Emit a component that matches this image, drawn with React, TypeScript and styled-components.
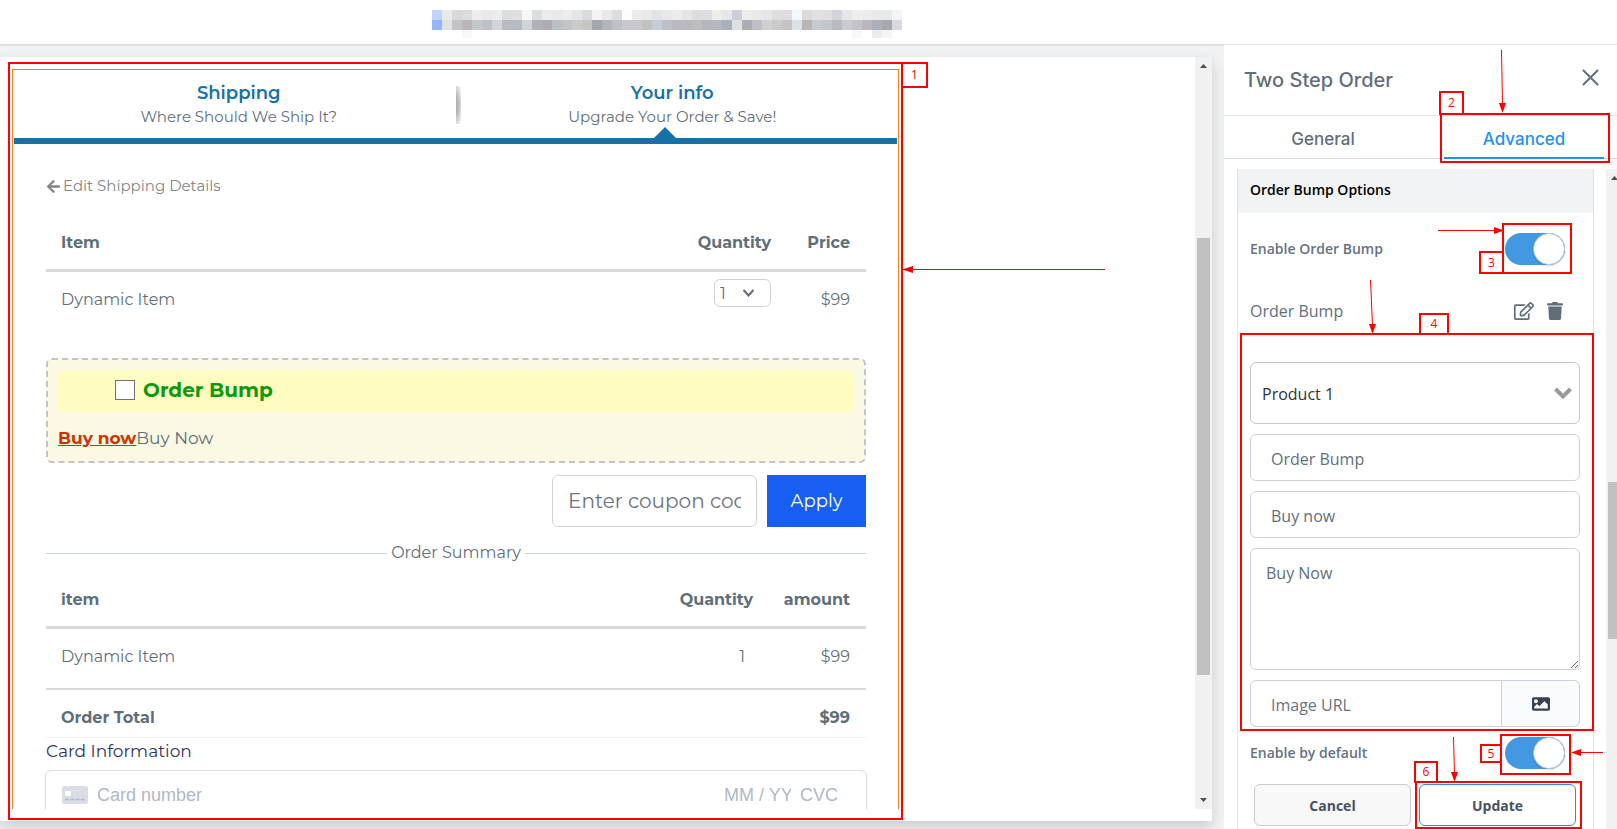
import React from 'react';
import styled, { createGlobalStyle, css } from 'styled-components';
import { FaArrowLeft, FaImage, FaRegEdit, FaTrash } from 'react-icons/fa';

const display = 'Montserrat, Inter, sans-serif';
const ui = '"Segoe UI", "Open Sans", sans-serif';
const heading = 'Inter, sans-serif';
const slate = '#5f6f7a';
const red = '#ff0000';

const GlobalStyle = createGlobalStyle`
  *, *::before, *::after { box-sizing: border-box; }
  body { margin: 0; background: #fff; color: ${slate}; font-family: ${ui}; font-size: 16px; line-height: 24px; overflow: hidden; }
  input, select, textarea, button { font: inherit; color: inherit; margin: 0; }
  h2, h3, p { margin: 0; }
`;

/* ---------- page shell ---------- */
const Page = styled.div`
  display: grid;
  grid-template: 44px minmax(0, 1fr) / minmax(0, 1fr) 393px;
  height: 100vh;
`;
const TopBar = styled.header`
  grid-column: 1 / -1;
  padding: 10px 0 0 432px;
  svg { display: block; }
`;
const Workspace = styled.main`
  display: flex;
  min-height: 0;
  padding: 11px 12px 8px 0;
  border-top: 2px solid #e0e0e1;
  background: #f1f2f4;
`;
const Canvas = styled.div`
  flex: 1;
  display: flex;
  justify-content: space-between;
  min-width: 0;
  background: #fff;
  box-shadow: 0 6px 14px rgba(0, 0, 0, 0.16);
`;
const Panel = styled.aside`
  position: relative;
  display: flex;
  flex-direction: column;
  min-height: 0;
  border-top: 1px solid #e0e0e1;
  background: #fff;
`;

/* ---------- scroll bars ---------- */
const Track = styled.div<{ $bottomGap?: number }>`
  display: flex;
  flex-direction: column;
  align-items: center;
  width: 17px;
  margin-bottom: ${p => p.$bottomGap ?? 0}px;
  background: #f1f1f1;
`;
const TrackPart = styled.div<{ $grow: number; $thumb?: boolean }>`
  flex: ${p => p.$grow} 0 0;
  width: 13px;
  background: ${p => (p.$thumb ? '#c1c1c1' : 'transparent')};
`;
const TrackArrow = styled.svg`
  flex: none;
  width: 17px;
  height: 17px;
  fill: #505050;
`;

function ScrollBar({ before, thumb, after, bottomGap, end }: { before: number; thumb: number; after: number; bottomGap?: number; end?: boolean }) {
  return (
    <Track $bottomGap={bottomGap} aria-hidden="true">
      <TrackArrow viewBox="0 0 17 17"><path d="M5 11 8.500 7 12 11Z" /></TrackArrow>
      <TrackPart $grow={before} />
      <TrackPart $grow={thumb} $thumb />
      <TrackPart $grow={after} />
      {end && <TrackArrow viewBox="0 0 17 17"><path d="M5 6 8.500 10 12 6Z" /></TrackArrow>}
    </Track>
  );
}

/* ---------- order form ---------- */
const Marked = styled.section`
  position: relative;
  flex: 1;
  display: flex;
  max-width: 895px;
  margin: 5px 0 1px 8px;
  padding: 5px 2px 9px;
  border: 2px solid ${red};
`;
const Form = styled.form`
  flex: 1;
  min-width: 0;
  padding: 0 1px;
  overflow: hidden;
  border: 1px solid #f5801f;
  border-bottom: 0;
  color: ${slate};
  font-family: ${display};
  font-size: 16px;
  font-weight: 400;
`;
const Steps = styled.div`
  display: flex;
  height: 74px;
  border-bottom: 6px solid #1671a9;
`;
const Step = styled.div<{ $current?: boolean }>`
  position: relative;
  flex: 1;
  padding-top: 11px;
  text-align: center;
  font-size: 15px;
  ${p => (p.$current ? css`
    padding-right: 8px;
    &::after {
      content: '';
      position: absolute;
      left: calc(50% - 22px);
      bottom: 0;
      border: 11px solid transparent;
      border-top: 0;
      border-bottom-color: #1671a9;
    }
  ` : css`
    padding-left: 8px;
    &::after {
      content: '';
      position: absolute;
      right: -5px;
      top: 16px;
      width: 5px;
      height: 38px;
      background: radial-gradient(ellipse at left center, #b4b4b4 30%, #fff 100%);
    }
  `)}
`;
const StepTitle = styled.h2`
  color: #1671a9;
  font-size: 18px;
  font-weight: 600;
  line-height: 24px;
`;
const FormBody = styled.div`
  padding: 30px 31px 0 32px;
`;
const BackLink = styled.a`
  display: flex;
  align-items: center;
  gap: 2px;
  color: #858585;
  font-size: 15px;
  text-decoration: none;
`;
const Items = styled.table<{ $top: number; $last: number }>`
  width: 100%;
  margin-top: ${p => p.$top}px;
  border-collapse: separate;
  border-spacing: 0;
  th, td { padding: 16px 0 19px; text-align: right; vertical-align: top; font-weight: 400; }
  th:first-child, td:first-child { padding-left: 15px; text-align: left; }
  th:last-child, td:last-child { width: ${p => p.$last}px; padding-right: 16px; }
  thead th { padding-top: 12px; padding-bottom: 14px; border-bottom: 3px solid #d9d9d9; font-weight: 700; }
  tfoot th, tfoot td { padding-bottom: 7px; border-top: 2px solid #d9d9d9; border-bottom: 1px solid #eff5f5; font-weight: 700; }
`;
const QuantityCell = styled.td`
  && { padding-top: 7px; padding-bottom: 25px; }
`;
const CountCell = styled.td`
  && { padding-right: 8px; }
`;
const SelectBox = styled.span`
  display: inline-grid;
  align-items: center;
  vertical-align: top;
  svg { grid-area: 1 / 1; justify-self: end; pointer-events: none; }
`;
const QuantitySelect = styled.select`
  grid-area: 1 / 1;
  width: 57px;
  height: 28px;
  padding: 2px 5px 0;
  appearance: none;
  border: 1px solid #cfd2da;
  border-radius: 6px;
  background: #fff;
  font-size: 16px;
`;
const SmallChevron = styled.svg`
  width: 13px;
  height: 8px;
  margin: 0 16px 1px 0;
  fill: none;
  stroke: #626b7a;
  stroke-width: 2;
  stroke-linecap: round;
`;
const Bump = styled.div`
  margin-top: 26px;
  padding: 10px 10px 11px;
  border: 2px dashed #c4c4c4;
  border-radius: 6px;
  background: #fbf8e4;
  font-size: 17px;
`;
const BumpOffer = styled.label`
  display: flex;
  align-items: center;
  gap: 8px;
  height: 42px;
  margin-bottom: 14px;
  padding: 0 0 2px 57px;
  border-radius: 6px;
  background: #fefcc0;
  color: #0a9a0a;
  font-size: 20px;
  font-weight: 700;
`;
const BumpCheck = styled.input`
  width: 20px;
  height: 20px;
  appearance: none;
  border: 1px solid #6b7280;
  background: #fff;
`;
const BumpLead = styled.strong`
  color: #cc3300;
  font-weight: 700;
  text-decoration: underline;
`;
const Coupon = styled.div`
  display: flex;
  justify-content: flex-end;
  gap: 10px;
  height: 52px;
  margin-top: 12px;
`;
const CouponInput = styled.input`
  width: 205px;
  padding: 0 15px;
  border: 1px solid #cfd2da;
  border-radius: 6px;
  font-size: 20px;
  font-weight: 400;
  &::placeholder { color: #6b7280; opacity: 1; }
`;
const ApplyButton = styled.button`
  width: 99px;
  border: 0;
  background: #175ff2;
  color: #fff;
  font-size: 18px;
`;
const SummaryRule = styled.div`
  display: flex;
  align-items: center;
  gap: 4px;
  margin-top: 14px;
  &::before, &::after { content: ''; flex: 1; height: 1px; background: #cbd3da; }
`;
const CardLabel = styled.label`
  display: block;
  margin: 1px 0 7px;
  color: #32325d;
  font-size: 17px;
`;
const CardBox = styled.div`
  display: flex;
  align-items: center;
  gap: 9px;
  height: 50px;
  margin: 0 -1px;
  padding: 0 28px 0 16px;
  border: 1px solid #dedede;
  border-radius: 6px;
  box-shadow: 0 1px 2px rgba(0, 0, 0, 0.08);
`;
const CardInput = styled.input<{ $width?: number }>`
  flex: ${p => (p.$width ? `0 0 ${p.$width}px` : '1')};
  min-width: 0;
  width: ${p => p.$width ?? 100}px;
  padding: 0;
  border: 0;
  font-family: "Liberation Sans", Arial, sans-serif;
  font-size: 18px;
  font-weight: 400;
  &::placeholder { color: #aeb9c6; opacity: 1; }
`;

/* ---------- settings panel ---------- */
const PanelHeader = styled.div`
  display: flex;
  align-items: center;
  justify-content: space-between;
  height: 71px;
  padding: 0 18px 0 20px;
  border-bottom: 1px solid #dfe2e5;
`;
const PanelTitle = styled.h2`
  font-family: ${heading};
  font-size: 20px;
  font-weight: 500;
`;
const CloseButton = styled.button`
  padding: 0 0 6px;
  border: 0;
  background: none;
  line-height: 0;
`;
const Tabs = styled.nav`
  display: grid;
  grid-template-columns: 1fr 1fr;
  gap: 41px;
  height: 43px;
  padding: 0 13px 0 19px;
  border-bottom: 1px solid #d5dae0;
`;
const Tab = styled.button<{ $active?: boolean }>`
  margin-bottom: -1px;
  padding: 4px 0 0;
  border: 0;
  border-bottom: 2px solid ${p => (p.$active ? '#2490f5' : 'transparent')};
  background: none;
  color: ${p => (p.$active ? '#2490f5' : slate)};
  font-family: ${heading};
  font-size: 17px;
  font-weight: 500;
`;
const PanelBody = styled.div`
  flex: 1;
  display: grid;
  grid-template-columns: minmax(0, 1fr) 17px;
  gap: 12px;
  min-height: 0;
  margin: 10px -6px 0 13px;
  overflow: hidden;
`;
const PanelClip = styled.div`
  flex: 1;
  display: flex;
  min-height: 0;
  overflow: hidden;
`;
const Group = styled.section`
  border: 1px solid #dfe1e5;
  border-width: 0 1px;
`;
const GroupTitle = styled.h3`
  height: 44px;
  padding: 9px 12px;
  background: #f2f3f5;
  color: #000;
  font-size: 14px;
  font-weight: 600;
`;
const Fields = styled.div`
  padding: 20px 13px 0 12px;
`;
const SwitchRow = styled.label`
  display: flex;
  align-items: center;
  justify-content: space-between;
  padding-right: 15px;
  color: #66727f;
  font-size: 14px;
  font-weight: 600;
  line-height: 32px;
`;
const Switch = styled.input`
  display: flex;
  justify-content: flex-end;
  width: 60px;
  height: 32px;
  appearance: none;
  border-radius: 16px;
  background: #4299e1;
  &::after {
    content: '';
    width: 32px;
    height: 32px;
    border: 1px solid #b4c5d6;
    border-radius: 50%;
    background: #fff;
    box-shadow: 0 1px 2px rgba(0, 0, 0, 0.15);
  }
`;
const BumpRow = styled.div`
  display: flex;
  align-items: center;
  justify-content: space-between;
  margin: 34px 0 39px;
  padding-right: 16px;
`;
const IconActions = styled.div`
  display: flex;
  gap: 12px;
`;
const IconButton = styled.button`
  padding: 0;
  border: 0;
  background: none;
  line-height: 0;
`;
const FieldStack = styled.div`
  display: flex;
  flex-direction: column;
  gap: 10px;
`;
const fieldFrame = css`
  width: 100%;
  border: 1px solid #cdd0d8;
  border-radius: 6px;
  background: #fff;
`;
const ProductSelect = styled.select`
  ${fieldFrame}
  grid-area: 1 / 1;
  height: 62px;
  padding: 2px 11px 0;
  appearance: none;
  border-color: #c4c6c8;
  color: #333;
`;
const BigChevron = styled.svg`
  width: 18px;
  height: 13px;
  margin: 0 8px 0 0;
  fill: none;
  stroke: #9a9a9a;
  stroke-width: 4;
`;
const TextField = styled.input`
  ${fieldFrame}
  height: 47px;
  padding: 2px 20px 0;
  &::placeholder { color: #6b7280; opacity: 1; }
`;
const TextArea = styled.textarea`
  ${fieldFrame}
  display: block;
  height: 122px;
  padding: 12px 15px;
  resize: vertical;
`;
const ImageField = styled.div`
  display: flex;
  ${TextField} { flex: 1; min-width: 0; border-radius: 6px 0 0 6px; }
`;
const PickButton = styled.button`
  width: 78px;
  border: 1px solid #cdd0d8;
  border-left: 0;
  border-radius: 0 6px 6px 0;
  background: #f8fafc;
  color: #374151;
  line-height: 0;
`;
const Actions = styled.div`
  display: flex;
  gap: 8px;
  padding: 15px 4px 0;
`;
const ActionButton = styled.button<{ $primary?: boolean }>`
  flex: 1;
  height: 42px;
  padding-top: 2px;
  border: 1px solid ${p => (p.$primary ? '#2b8deb' : '#cbcbcb')};
  border-radius: 6px;
  background: ${p => (p.$primary ? '#fff' : '#f8f8f8')};
  color: #475262;
  font-size: 14px;
  font-weight: 700;
`;

/* ---------- tutorial markers laid over the page ---------- */
type Box = { $x: number; $y: number; $w: number; $h: number };
const Outline = styled.div<Box>`
  position: absolute;
  left: ${p => p.$x}px;
  top: ${p => p.$y}px;
  width: ${p => p.$w}px;
  height: ${p => p.$h}px;
  border: 2px solid ${red};
  pointer-events: none;
`;
const Badge = styled(Outline)`
  display: flex;
  align-items: center;
  justify-content: center;
  background: #fff;
  color: ${red};
  font-size: 12px;
  line-height: 12px;
`;
const ArrowLayer = styled.svg<Box>`
  position: absolute;
  left: ${p => p.$x}px;
  top: ${p => p.$y}px;
  width: ${p => p.$w}px;
  height: ${p => p.$h}px;
  overflow: visible;
  pointer-events: none;
  stroke: ${red};
  fill: ${red};
  path { stroke: none; }
`;

const mosaicTop = 'bfd3ff e9e9ea d8d9db dcdde0 ededed ebe8e9 ebecee dadce0 dfdfe1 f5f6f8 dcdddf ebebed e9e9ea ececea e4e5e7 d9dbdf f4f4f2 e8e9ee dcdcde fdfdfd eaecee e9e9ea e0e2e5 e7e8ea ececec e5e5e5 dcdcde dcdee2 ededec e6e7ea cccdd5 ecedef eaeaeb e5e6ea dfdedb dddde0 f3f8fe dadada e0e0e0 dfdfe1 d3d4dc e6e6e7 ededed ececee e9e9ea e8e9ea f4f5f7'.split(' ');
const mosaicBottom = '94b5ff e1e2e3 c3c3c7 b9b5b8 c5c8cb bcc0ca d3d4d7 b9bac2 b5bbc4 d2d3d6 afb2b9 adadb3 babfc6 c3c4c6 cbcbcb c6c6c6 a1a6b0 b2b4b9 bfc1c7 c8c8ce c8c8ce c2c2c1 c5ced8 bfbfc7 b8b9c0 bababe bebebe b5b5bc b6b7bc a9b0ba dfe0e1 adadb3 c0c1c8 d0d0d2 cacacc c5c4c2 d9e1e9 b9b5b6 c7cad0 c3c6cb b9b9c3 caccd2 c4c4c7 b8b7be adb0ba a7a7ad d6d9df'.split(' ');
const mosaicTail: [number, string][] = [[3, 'f7f7f7'], [42, 'f8f8f8'], [44, 'ececee'], [45, 'f3f4f6']];

function RedactedTitle() {
  return (
    <svg width="470" height="28" viewBox="0 0 470 28" shapeRendering="crispEdges" aria-hidden="true">
      {mosaicTop.map((c, i) => <rect key={i} x={i * 10} y="0" width="10" height="10" fill={`#${c}`} />)}
      {mosaicBottom.map((c, i) => <rect key={i} x={i * 10} y="10" width="10" height="10" fill={`#${c}`} />)}
      {mosaicTail.map(([i, c]) => <rect key={i} x={i * 10} y="20" width="10" height="8" fill={`#${c}`} />)}
    </svg>
  );
}

function CardIcon() {
  return (
    <svg width="26" height="18" viewBox="0 0 26 18" aria-hidden="true">
      <rect width="26" height="18" rx="2" fill="#dadde5" />
      <rect x="3" y="5" width="6" height="5" rx="1" fill="#fff" />
      <path d="M3 13.500h20" stroke="#b3bac8" strokeWidth="1.500" strokeDasharray="4 1.300" />
    </svg>
  );
}

function OrderForm() {
  return (
    <Form onSubmit={e => e.preventDefault()}>
      <Steps>
        <Step>
          <StepTitle>Shipping</StepTitle>
          <p>Where Should We Ship It?</p>
        </Step>
        <Step $current>
          <StepTitle>Your info</StepTitle>
          <p>Upgrade Your Order &amp; Save!</p>
        </Step>
      </Steps>
      <FormBody>
        <BackLink href="#shipping"><FaArrowLeft size={15} /> Edit Shipping Details</BackLink>
        <Items $top={21} $last={95}>
          <thead><tr><th>Item</th><th>Quantity</th><th>Price</th></tr></thead>
          <tbody>
            <tr>
              <td>Dynamic Item</td>
              <QuantityCell>
                <SelectBox>
                  <QuantitySelect aria-label="Quantity" defaultValue="1"><option>1</option><option>2</option></QuantitySelect>
                  <SmallChevron viewBox="0 0 13 8"><path d="M2 1.500 6.500 6.500 11 1.500" /></SmallChevron>
                </SelectBox>
              </QuantityCell>
              <td>$99</td>
            </tr>
          </tbody>
        </Items>
        <Bump>
          <BumpOffer><BumpCheck type="checkbox" /> Order Bump</BumpOffer>
          <p><BumpLead>Buy now</BumpLead>Buy Now</p>
        </Bump>
        <Coupon>
          <CouponInput aria-label="Coupon code" placeholder="Enter coupon code" />
          <ApplyButton type="button">Apply</ApplyButton>
        </Coupon>
        <SummaryRule>Order Summary</SummaryRule>
        <Items $top={11} $last={113}>
          <thead><tr><th>item</th><th>Quantity</th><th>amount</th></tr></thead>
          <tbody><tr><td>Dynamic Item</td><CountCell>1</CountCell><td>$99</td></tr></tbody>
          <tfoot><tr><th>Order Total</th><td /><td>$99</td></tr></tfoot>
        </Items>
        <CardLabel htmlFor="card-number">Card Information</CardLabel>
        <CardBox>
          <CardIcon />
          <CardInput id="card-number" placeholder="Card number" />
          <CardInput $width={67} aria-label="Expiry date" placeholder="MM / YY" />
          <CardInput $width={38} aria-label="Security code" placeholder="CVC" />
        </CardBox>
      </FormBody>
    </Form>
  );
}

function Settings() {
  return (
    <Panel>
      <PanelHeader>
        <PanelTitle>Two Step Order</PanelTitle>
        <CloseButton aria-label="Close">
          <svg width="17" height="17" viewBox="0 0 17 17" stroke={slate} strokeWidth="2" strokeLinecap="round"><path d="M1.500 1.500 15.500 15.500M15.500 1.500 1.500 15.500" /></svg>
        </CloseButton>
      </PanelHeader>
      <Tabs>
        <Tab>General</Tab>
        <Tab $active>Advanced</Tab>
      </Tabs>
      <PanelClip>
        <PanelBody>
          <Group>
            <GroupTitle>Order Bump Options</GroupTitle>
            <Fields>
              <SwitchRow>Enable Order Bump<Switch type="checkbox" role="switch" defaultChecked /></SwitchRow>
              <BumpRow>
                <span>Order Bump</span>
                <IconActions>
                  <IconButton aria-label="Edit"><FaRegEdit size={20} /></IconButton>
                  <IconButton aria-label="Delete"><FaTrash size={18} /></IconButton>
                </IconActions>
              </BumpRow>
              <FieldStack>
                <SelectBox>
                  <ProductSelect aria-label="Product" defaultValue="Product 1"><option>Product 1</option></ProductSelect>
                  <BigChevron viewBox="0 0 18 13"><path d="M1.500 2 9 9.500 16.500 2" /></BigChevron>
                </SelectBox>
                <TextField aria-label="Headline" defaultValue="Order Bump" />
                <TextField aria-label="Lead text" defaultValue="Buy now" />
                <TextArea aria-label="Description" defaultValue="Buy Now" />
                <ImageField>
                  <TextField aria-label="Image URL" placeholder="Image URL" />
                  <PickButton aria-label="Choose image"><FaImage size={18} /></PickButton>
                </ImageField>
                <SwitchRow>Enable by default<Switch type="checkbox" role="switch" defaultChecked /></SwitchRow>
              </FieldStack>
              <Actions>
                <ActionButton>Cancel</ActionButton>
                <ActionButton $primary>Update</ActionButton>
              </Actions>
            </Fields>
          </Group>
          <ScrollBar before={296} thumb={157} after={190} />
        </PanelBody>
      </PanelClip>
      <PanelMarkers />
    </Panel>
  );
}

function PanelMarkers() {
  return (
    <>
      <Badge $x={215} $y={46} $w={25} $h={24}>2</Badge>
      <Outline $x={216} $y={68} $w={170} $h={50} />
      <Badge $x={255} $y={206} $w={25} $h={23}>3</Badge>
      <Outline $x={278} $y={178} $w={70} $h={51} />
      <Badge $x={195} $y={268} $w={30} $h={22}>4</Badge>
      <Outline $x={16} $y={288} $w={354} $h={398} />
      <Badge $x={256} $y={699} $w={22} $h={19}>5</Badge>
      <Outline $x={276} $y={689} $w={71} $h={41} />
      <Badge $x={190} $y={716} $w={24} $h={22}>6</Badge>
      <Outline $x={191} $y={736} $w={167} $h={48} />
      <ArrowLayer $x={0} $y={0} $w={393} $h={784} aria-hidden="true">
        <line x1="277.500" y1="5" x2="278.500" y2="60" />
        <path d="M275 58h7l-3.500 10z" />
        <line x1="214" y1="185.500" x2="272" y2="185.500" />
        <path d="M270 182v7l10-3.500z" />
        <line x1="146.500" y1="235" x2="148.500" y2="281" />
        <path d="M145 279h7l-3.500 10z" />
        <line x1="379" y1="707.500" x2="355" y2="707.500" />
        <path d="M357 704v7l-10-3.500z" />
        <line x1="229.500" y1="692" x2="230.500" y2="729" />
        <path d="M227 727h7l-3.500 10z" />
      </ArrowLayer>
    </>
  );
}

export default function App() {
  return (
    <>
      <GlobalStyle />
      <Page>
        <TopBar><RedactedTitle /></TopBar>
        <Workspace>
          <Canvas>
            <Marked>
              <OrderForm />
              <Badge $x={891} $y={-2} $w={27} $h={26}>1</Badge>
              <ArrowLayer $x={891} $y={200} $w={204} $h={12} aria-hidden="true">
                <line x1="10" y1="5.500" x2="204" y2="5.500" />
                <path d="M12 2v7L1 5.500z" />
              </ArrowLayer>
            </Marked>
            <ScrollBar before={164} thumb={437} after={117} bottomGap={12} end />
          </Canvas>
        </Workspace>
        <Settings />
      </Page>
    </>
  );
}
